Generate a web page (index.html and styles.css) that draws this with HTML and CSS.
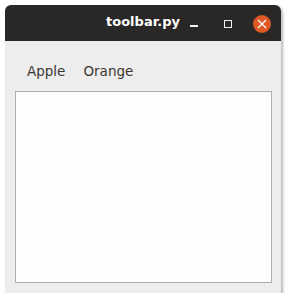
FILE: index.html
```html
<!DOCTYPE html>
<html>
<head>
<meta charset="utf-8">
<link rel="stylesheet" href="styles.css">
</head>
<body>
<div class="window">
  <div class="titlebar">
    <div class="spacer"></div>
    <div class="title">toolbar.py</div>
    <div class="controls">
      <span class="btn-min"></span>
      <span class="btn-max"></span>
      <span class="btn-close">
        <svg width="18" height="18" viewBox="0 0 18 18"><path d="M5 5 L13 13 M13 5 L5 13" stroke="#fff" stroke-width="1.2" fill="none"/></svg>
      </span>
    </div>
  </div>
  <div class="menubar">
    <span class="menu-item">Apple</span>
    <span class="menu-item">Orange</span>
  </div>
  <div class="textarea"></div>
</div>
</body>
</html>
```

FILE: styles.css
```css
html, body {
  margin: 0;
  padding: 0;
  background: #ffffff;
}
body {
  padding: 5px 0 0 5px;
  font-family: "DejaVu Sans", sans-serif;
}
.window {
  width: 276px;
  height: 288px;
  background: #ededed;
  border-radius: 6px 6px 0 0;
  box-shadow: 2px 2px 3px rgba(0,0,0,0.28);
  display: flex;
  flex-direction: column;
}
.titlebar {
  height: 36px;
  flex: none;
  background: #2a2727;
  border-radius: 6px 6px 0 0;
  display: grid;
  grid-template-columns: 1fr auto 1fr;
  align-items: center;
}
.title {
  color: #ffffff;
  font-weight: bold;
  font-size: 13px;
  line-height: 16px;
  padding-bottom: 2px;
}
.controls {
  display: flex;
  align-items: center;
  justify-content: flex-end;
  padding-right: 10px;
}
.btn-min {
  width: 8px;
  height: 1.5px;
  background: #f2f2f2;
  margin-top: 6px;
}
.btn-max {
  width: 6px;
  height: 6px;
  border: 1px solid #f2f2f2;
  margin-left: 26px;
  margin-top: 1px;
}
.btn-close {
  width: 18px;
  height: 18px;
  border-radius: 50%;
  background: #dd5a27;
  margin-left: 21px;
  margin-top: 1px;
  display: flex;
}
.menubar {
  height: 50px;
  box-sizing: border-box;
  flex: none;
  padding: 22px 0 0 13px;
  display: flex;
}
.menu-item {
  font-size: 13.5px;
  line-height: 16px;
  color: #3a3633;
  padding: 0 9px;
}
.textarea {
  margin: 0 9px 10px 10px;
  flex: 1;
  background: #fdfdfd;
  border: 1px solid #aab0b0;
}
```
